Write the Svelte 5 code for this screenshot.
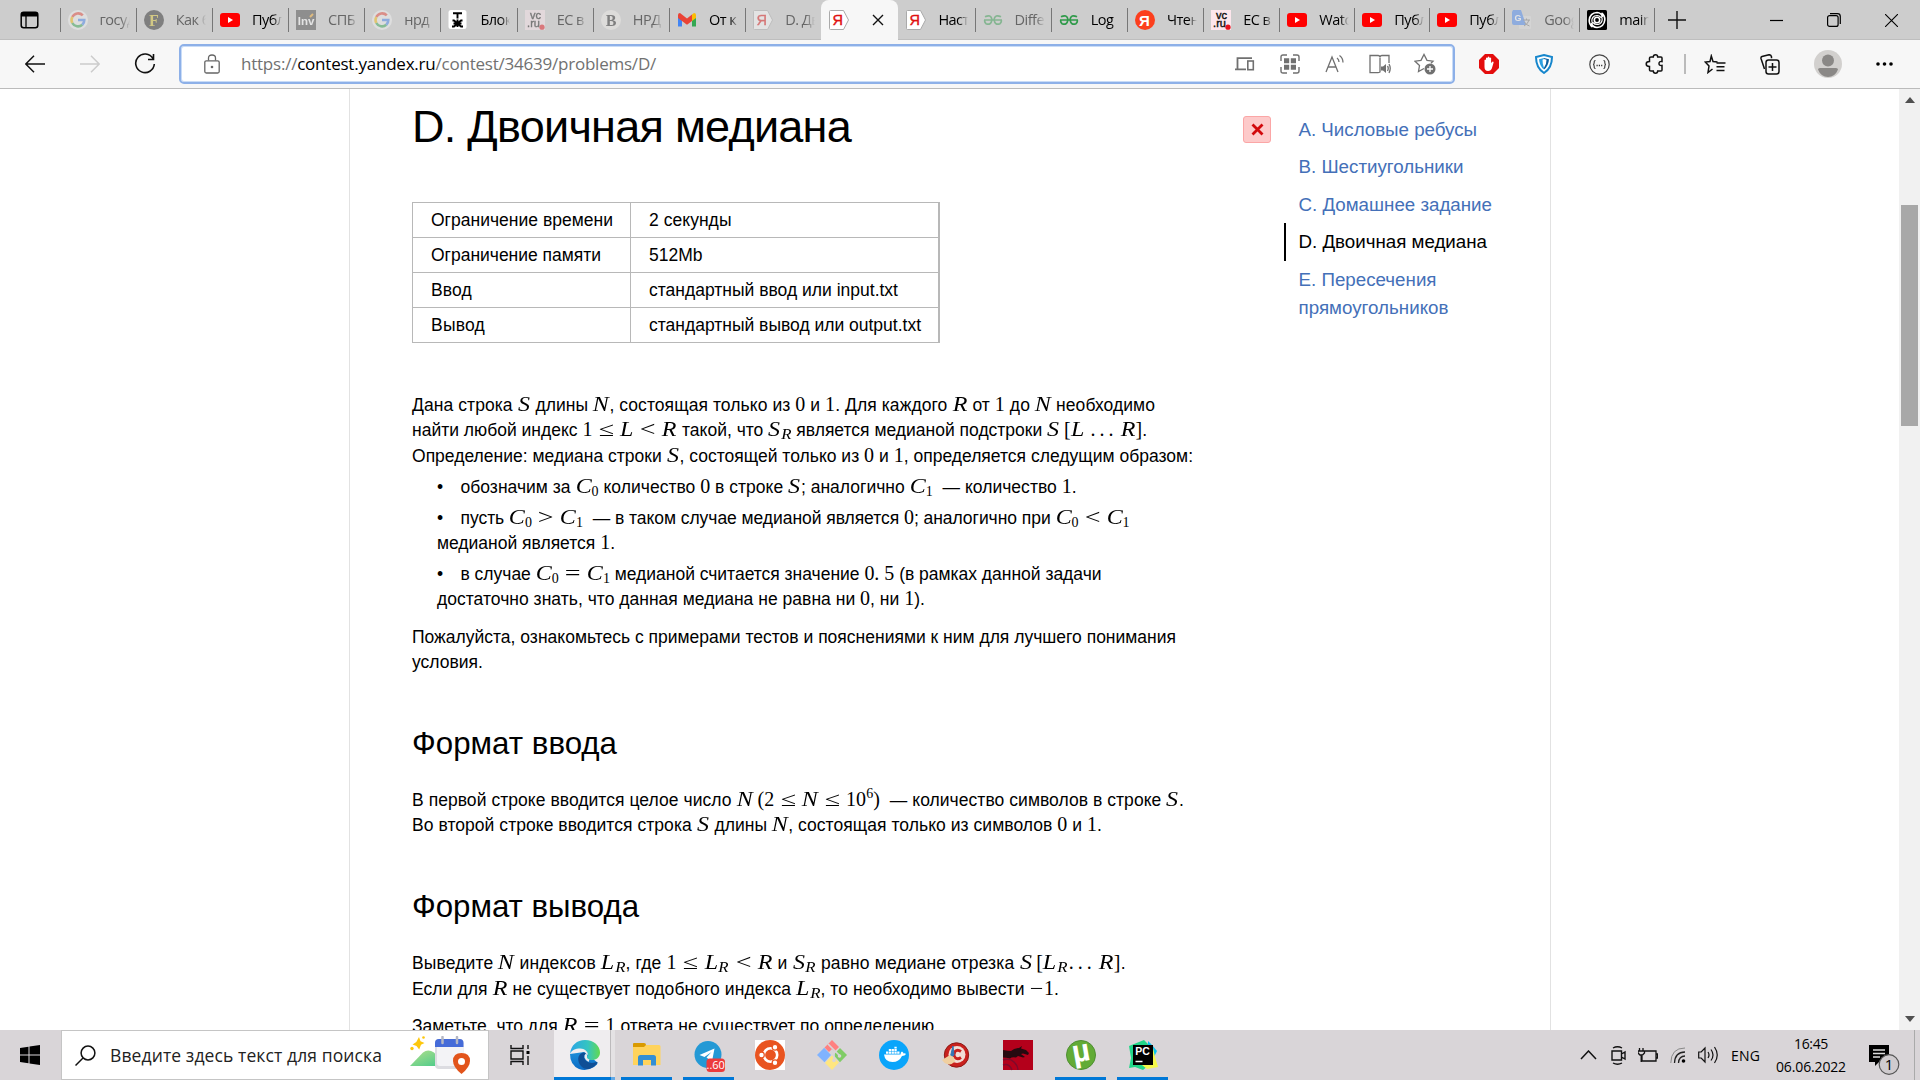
<script>
  const tabs = [
    { icon: 'google', label: 'госуд', dim: true },
    { icon: 'f', label: 'Как б', dim: true },
    { icon: 'yt', label: 'Публ' },
    { icon: 'inv', label: 'СПБ', dim: true },
    { icon: 'google', label: 'нрд', dim: true },
    { icon: 'tj', label: 'Блок' },
    { icon: 'vc', label: 'ЕС в', dim: true },
    { icon: 'b', label: 'НРД', dim: true },
    { icon: 'gmail', label: 'От к' },
    { icon: 'ya', label: 'D. Дв', dim: true },
    { icon: 'ya', active: true },
    { icon: 'ya', label: 'Наст' },
    { icon: 'gfg', label: 'Diffe', dim: true },
    { icon: 'gfg', label: 'Log' },
    { icon: 'yared', label: 'Чтен' },
    { icon: 'vc', label: 'ЕС в' },
    { icon: 'yt', label: 'Watc', late: true },
    { icon: 'yt', label: 'Публ', late: true },
    { icon: 'yt', label: 'Публ', late: true },
    { icon: 'translate', label: 'Goog', dim: true, late: true },
    { icon: 'spiral', label: 'main', late: true }
  ];

  const limits = [
    ['Ограничение времени', 182, '2 секунды', 82.5],
    ['Ограничение памяти', 170, '512Mb', 53.5],
    ['Ввод', 41, 'стандартный ввод или input.txt', 249],
    ['Вывод', 54, 'стандартный вывод или output.txt', 272]
  ];

  const apps = [
    { name: 'edge', open: true, current: true },
    { name: 'explorer', open: true },
    { name: 'telegram', open: true },
    { name: 'ubuntu' },
    { name: 'git' },
    { name: 'docker' },
    { name: 'ccleaner' },
    { name: 'dragon' },
    { name: 'utorrent', open: true },
    { name: 'pycharm', open: true }
  ];

  // Tracks the text so that the element takes the given width in pixels.
  function fit(node, width) {
    const now = node.getBoundingClientRect().width;
    const count = node.textContent.length;
    if (count) node.style.letterSpacing = `${(width - now) / count}px`;
  }
</script>

{#snippet tabIcon(name)}
  <svg class="fav" viewBox="0 0 20 20">
    {#if name === 'google'}
      <circle cx="10" cy="10" r="10" fill="#f4f4f4" />
      <g fill="none" stroke-width="2.6">
        <path d="M14.8 5.300A6.500 6.500 0 0 0 4.300 7" stroke="#ea4335" />
        <path d="M4.300 7a6.500 6.500 0 0 0 0 6" stroke="#fbbc05" />
        <path d="M4.300 13a6.500 6.500 0 0 0 10 1.800" stroke="#34a853" />
        <path d="M14.300 14.800A6.500 6.500 0 0 0 16.300 10h-6.300" stroke="#4285f4" />
      </g>
    {:else if name === 'f'}
      <circle cx="10" cy="10" r="10" fill="#222" />
      <text x="10" y="15.500" class="serif" font-size="16" fill="#d9c22e">F</text>
    {:else if name === 'yt'}
      <rect y="3" width="20" height="14" rx="3" fill="#f00" />
      <path d="M8 7v6l5-3z" fill="#fff" />
    {:else if name === 'inv'}
      <rect width="20" height="20" fill="#444" />
      <text x="10" y="15" class="sans" font-size="11.500" fill="#fff">Inv</text>
      <path d="M14 7l3-3" stroke="#f5a623" stroke-width="2" />
    {:else if name === 'tj'}
      <rect x=".5" width="18" height="19" rx="2.500" fill="#fff" />
      <path d="M5 3.200h9M9.500 3v5.500M9.500 9.500v7.500M4.500 10.500h1.500l7 6h2M14.500 10.500h-1.500l-7 6h-2M5.500 13.500h8" stroke="#000" stroke-width="1.900" fill="none" />
    {:else if name === 'vc'}
      <rect width="20" height="20" fill="#fde6ec" />
      <g class="thin" font-size="11" fill="#111" stroke="#111" stroke-width=".400">
        <text x="10.500" y="8.500">vc</text>
        <text x="8.500" y="17">.ru</text>
      </g>
      <circle cx="17" cy="17.200" r="2.600" fill="#e8121c" />
    {:else if name === 'b'}
      <circle cx="10" cy="10" r="10" fill="#f1efeb" />
      <text x="10" y="15.500" class="serif" font-size="16" fill="#222">B</text>
    {:else if name === 'gmail'}
      <path d="M1 5v11.500h4V8z" fill="#4285f4" />
      <path d="M19 5v11.500h-4V8z" fill="#34a853" />
      <path d="M15 4.500 17 3q2 0 2 2v3l-4 3z" fill="#fbbc04" />
      <path d="M1 8V5q0-2 2-2l7 5.500L15 4.500V11l-5 3.800L5 11z" fill="#ea4335" />
    {:else if name === 'ya'}
      <path d="M1.500.500h13l5 9.500-5 9.500h-13q-1 0-1-1v-17q0-1 1-1z" fill="#fff" stroke="#aaa" />
      <text x="8.800" y="15.300" class="thin" font-size="14.500" fill="#e01010" stroke="#e01010" stroke-width=".400">Я</text>
    {:else if name === 'gfg'}
      <path d="M1 10h18M2 6.800q6-3 7 2.900-1 6-6 4-2-2-1-4M18 6.800q-6-3-7 2.900 1 6 6 4 2-2 1-4" stroke="#2f9a4a" stroke-width="1.700" fill="none" />
    {:else if name === 'yared'}
      <circle cx="10" cy="10" r="10" fill="#fc3f1d" />
      <text x="9.500" y="15.500" class="sans" font-size="15" fill="#fff">Я</text>
    {:else if name === 'translate'}
      <rect x="7" y="6" width="12" height="13" rx="1" fill="#ddd" />
      <path d="M1 0h8l5 15H2q-2 0-2-2V2z" fill="#4285f4" />
      <text x="6" y="10.500" class="sans" font-size="9" fill="#fff">G</text>
      <path d="M11 10h7M14.500 8.500V10M12 16q4-2 5-6M12.500 12q1.500 3 5 4" fill="none" stroke="#777" />
    {:else if name === 'spiral'}
      <rect width="20" height="20" rx="1.500" fill="#000" />
      <g fill="none" stroke="#fff" stroke-width="1.600">
        <circle cx="10" cy="10" r="2.700" />
        <path d="M5.500 17q-3.500-2.500-3.300-7Q3 3 10 2.500q4.500.200 5.500 4.500M14.500 3q3.500 2.500 3.300 7-.8 7-7.800 7.500-4.500-.2-5.500-4.500" />
        <path d="M5.500 13.500q-2-5 2-7.500 4-1.500 6.500 1.500M14.500 6.500q2 5-2 7.500-4 1.500-6.500-1.500" stroke-width="1.200" />
      </g>
    {/if}
  </svg>
{/snippet}

{#snippet appIcon(name)}
  <svg class="app" viewBox="0 0 30 30">
    {#if name === 'edge'}
      <defs>
        <linearGradient id="edgeTop" x1="0" x2="1"><stop offset="0" stop-color="#2aa5e6" /><stop offset=".6" stop-color="#35c5c0" /><stop offset="1" stop-color="#62d94f" /></linearGradient>
        <linearGradient id="edgeSide" x1="0" y1="0" x2="0" y2="1"><stop offset="0" stop-color="#1b8fd9" /><stop offset="1" stop-color="#0a6ac4" /></linearGradient>
      </defs>
      <path d="M0 14Q0 25 9 29q8 2.500 15-2 4-3 3.500-4.500L14 12z" fill="url(#edgeSide)" />
      <path d="M0 14C1 5 7 0 15 0c9 0 15 6 15 12.500 0 5-4 7.500-8 7.500-4 0-5.500-1-5-3 3-4-2-9.500-8.500-8.500-5 .5-7.500 3-8.500 5.500z" fill="url(#edgeTop)" />
      <path d="M13 12.500c-6 2-6 9-2 13.500 2 2 4.500 3.500 7.500 3q6-1.500 9-6.500-.5-1-2-.2c-6 2-11-1.300-11.500-5.300q0-2.500 2-3.500-1-1.500-3-1z" fill="#0f4f96" />
      <path d="M16 13.500q-2 1.500-1.500 4 1 3 4 4.500l1-2.500q-3-1-2.500-2.800.8-2-1-3.200z" fill="#efedef" />
    {:else if name === 'explorer'}
      <path d="M1 4q0-1 1-1h10q2 0 2 2v3H1z" fill="#d99a00" />
      <path d="M1 7h11l2-2h13q1.500 0 1.500 1.500V25H1z" fill="#ffd35c" />
      <path d="M6 25.500v-8q0-2.500 2.500-2.500h13q2.500 0 2.500 2.500v8h-5V20h-8v5.500z" fill="#338fd4" />
    {:else if name === 'telegram'}
      <circle cx="14" cy="14.500" r="13.500" fill="#2499d5" />
      <path d="M5.500 15 20.500 8.500l-2.500 13-5.500-4 5-5.500-7 5z" fill="#fff" />
      <rect x="12.500" y="18.500" width="18.500" height="13.500" rx="3.500" fill="#ec3b3b" />
      <text x="21.700" y="29" class="count" font-size="11" fill="#fff">..60</text>
    {:else if name === 'ubuntu'}
      <rect width="30" height="30" fill="#fff" />
      <circle cx="15" cy="15" r="15" fill="#e95420" />
      <circle cx="15.500" cy="15" r="6.700" fill="none" stroke="#fff" stroke-width="2.600" />
      <g fill="#fff" stroke="#e95420" stroke-width="1.200"><circle cx="6.500" cy="15" r="2.800" /><circle cx="20" cy="7.300" r="2.800" /><circle cx="20" cy="22.700" r="2.800" /></g>
    {:else if name === 'git'}
      <path d="M15 0l7 7-4.500 4.500L15 9l-3 3L7.500 7.500z" fill="#ff8080" />
      <path d="M7.200 7.800 14 15l-6.500 7.200L0 15z" fill="#80b3ff" />
      <path d="M15 15.500l7 7-7 7.500-7-7z" fill="#ffe680" />
      <path d="M23 8l7 7-7 7.200L16.500 15z" fill="#80cc66" />
      <path d="M11 4l6 6v11M17 10l6 6" stroke="#d9d5d8" stroke-width="1.700" fill="none" /><circle cx="17" cy="20.500" r="1.800" fill="#d9d5d8" /><circle cx="22.500" cy="16" r="1.800" fill="#d9d5d8" />
    {:else if name === 'docker'}
      <circle cx="15" cy="15" r="15" fill="#0aa5fb" />
      <path d="M5 14.500h16.500q0-2.500 1.500-3 1.500 1 1.500 2 1.500-.500 2.500.500-1 2-4 2-3 6-9.500 6-7.500 0-8.500-7.500z" fill="#fff" />
      <path d="M7 11.500h2.300v2.300H7zM9.800 11.500h2.300v2.300H9.800zM12.600 11.500h2.300v2.300h-2.300zM15.400 11.500h2.300v2.300h-2.300zM18.200 11.500h2.300v2.300h-2.300zM9.800 9h2.300v2H9.800zM12.600 9h2.300v2h-2.300zM15.400 9h2.300v2h-2.300zM15.400 6.800h2.300v1.700h-2.300z" fill="#fff" />
    {:else if name === 'ccleaner'}
      <circle cx="15.500" cy="15" r="12.200" fill="#c9211e" stroke="#8d1a16" />
      <circle cx="16" cy="14.500" r="8.500" fill="#f1ddd6" />
      <path d="M20 11.500q-3.500-2.500-6 0-1.800 3 0 6 2.500 2.500 6 0" fill="none" stroke="#c9211e" stroke-width="2.800" />
      <path d="M12 6l-3 12 4-3z" fill="#3477b5" stroke="#3477b5" />
      <path d="M1 20l8-5 4 2.500 1 4q-4 4-8 2.500-3-1-5-4z" fill="#f0cfa0" />
    {:else if name === 'dragon'}
      <rect width="30" height="30" fill="#b4001b" />
      <path d="M0 10q5 1 8 1 3-3 8-3l3-2-1 2.500 5 1.500 3 3-1 2-5-1.500-2 .500 4 3-2 .500-5-1.500-2 1.500q-4-1-6 1-4-1-7-1z" fill="#260a10" />
      <path d="M0 20q7-2 11 2t4 8M0 25q6-2 9 5" fill="none" stroke="#7e0a2c" stroke-width="1.500" />
    {:else if name === 'utorrent'}
      <circle cx="15" cy="15" r="14.500" fill="#62ab36" stroke="#4f8f33" />
      <text x="15.500" y="21.500" class="sans" font-size="31" fill="#fff" transform="rotate(-10 15 15)">µ</text>
    {:else if name === 'pycharm'}
      <path d="M1 6 11 2l5-2 5 5v20l-6 5-8-3-6 1 2-10z" fill="#21d789" />
      <path d="M20 1l4 4 5 6-4 8-5-5z" fill="#07c3f2" />
      <path d="M25 8l2 9 3 10-11 2-5-4z" fill="#f5f84a" />
      <rect x="5" y="5" width="20" height="20" fill="#000" />
      <text x="14.500" y="14.700" class="sans" font-size="10.500" fill="#fff">PC</text>
      <path d="M7.500 21.500h7" stroke="#fff" stroke-width="1.500" />
    {/if}
  </svg>
{/snippet}

<div class="screen">
  <header class="tabbar">
    <div class="tabmenu">
      <svg width="20" height="20" viewBox="0 0 20 20"><rect x="1.200" y="2.200" width="16.600" height="15.600" rx="2.500" fill="none" stroke="#000" stroke-width="1.500" /><path d="M1 6.500V4.500Q1 2 3.500 2h12Q18 2 18 4.500v2z" /><path d="M6 6v12" stroke="#000" stroke-width="1.300" /></svg>
    </div>
    {#each tabs as tab, n}
      <div class="tab" class:late={tab.late} class:active={tab.active} class:dim={tab.dim} class:bare={n === 11}>
        {@render tabIcon(tab.icon)}
        {#if tab.active}
          <svg class="closetab" viewBox="0 0 12 12"><path d="M1 1l10 10M11 1 1 11" stroke="#111" stroke-width="1.400" /></svg>
        {:else}
          <span>{tab.label}</span>
        {/if}
      </div>
    {/each}
    <div class="newtab">
      <svg width="18" height="18" viewBox="0 0 18 18"><path d="M9 0v18M0 9h18" stroke="#111" stroke-width="1.400" /></svg>
    </div>
    <div class="winctl">
      <div><svg width="13" height="13" viewBox="0 0 13 13"><path d="M0 6.500h13" stroke="#000" stroke-width="1.200" /></svg></div>
      <div><svg width="14" height="14" viewBox="0 0 14 14"><rect x=".6" y="2.600" width="10.500" height="10.800" rx="2" fill="none" stroke="#000" stroke-width="1.200" /><path d="M3 .700h7.500q2.800 0 2.800 2.800v7.500" fill="none" stroke="#000" stroke-width="1.200" /></svg></div>
      <div><svg width="13" height="13" viewBox="0 0 13 13"><path d="M0 0l13 13M13 0 0 13" stroke="#000" stroke-width="1.100" /></svg></div>
    </div>
  </header>

  <div class="toolbar">
    <div class="nav">
      <div><svg width="20" height="18" viewBox="0 0 20 18"><path d="M20 9H1M9 .800.800 9 9 17.200" fill="none" stroke="#111" stroke-width="1.500" /></svg></div>
      <div><svg width="20" height="18" viewBox="0 0 20 18"><path d="M0 9h19M11 .800 19.200 9 11 17.200" fill="none" stroke="#ccc" stroke-width="1.500" /></svg></div>
      <div><svg width="22" height="22" viewBox="0 0 22 22"><path d="M19 5.500A9.300 9.300 0 1 0 20.300 11M19.500 1v5.500H14" fill="none" stroke="#111" stroke-width="1.600" /></svg></div>
    </div>
    <div class="address">
      <svg class="lock" width="16" height="20" viewBox="0 0 16 20"><rect x=".8" y="6.800" width="14.400" height="12.200" rx="1.500" fill="none" stroke="#666" stroke-width="1.300" /><path d="M4.500 6.500V4q0-3 3.500-3t3.500 3v2.500" fill="none" stroke="#666" stroke-width="1.300" /><circle cx="8" cy="13" r="1.300" fill="#666" /></svg>
      <span class="url" use:fit={415}>https://<em>contest.yandex.ru</em>/contest/34639/problems/D/</span>
      <div class="urltools">
        <div><svg width="20" height="14" viewBox="0 0 20 14"><path d="M2.500 12V1.200H17M0 12.300h11" stroke="#707070" stroke-width="1.800" fill="none" /><rect x="12.800" y="4" width="5.500" height="8.700" fill="none" stroke="#707070" stroke-width="1.600" /></svg></div>
        <div><svg width="20" height="20" viewBox="0 0 20 20"><path d="M1 7V3q0-2 2-2h4M13 1h4q2 0 2 2v4M19 13v4q0 2-2 2h-4M7 19H3q-2 0-2-2v-4" fill="none" stroke="#707070" stroke-width="1.400" /><path d="M4 4.200h5.200v5H4zM10.800 4.200H16v5h-5.200zM4 10.800h5.200v5H4zM10.800 10.800H16v5h-5.200z" fill="#707070" /></svg></div>
        <div><svg width="20" height="20" viewBox="0 0 20 20"><path d="M1 18 7 3l6 15M3 13h8M12 4q2 1.500 2 4M14.500 1.500q3.500 2.500 3.500 7" fill="none" stroke="#707070" stroke-width="1.300" /></svg></div>
        <div><svg width="22" height="20" viewBox="0 0 22 20"><path d="M11 4v14q-1 .700-2 .700H1V1.500h8q2 0 2 2 0-2 2-2h7V9" fill="none" stroke="#707070" stroke-width="1.300" /><path d="M12 12.500h2l3-2.500v9l-3-2.500h-2z" fill="#707070" /><path d="M18.500 12q1.500 2 0 5M20 10q2.500 4 0 9" fill="none" stroke="#707070" stroke-width="1.300" /></svg></div>
        <div><svg width="22" height="22" viewBox="0 0 22 22"><path d="M10 15.500l-5.500 3 1-6L1 8.200l6-.9L10 1.500l3 5.800 6 .9-2 2" fill="none" stroke="#707070" stroke-width="1.300" /><circle cx="16" cy="16" r="5.500" fill="#707070" /><path d="M16 13v6M13 16h6" stroke="#fff" stroke-width="1.300" /></svg></div>
      </div>
    </div>
    <div class="ext">
      <div><svg width="20" height="20" viewBox="0 0 20 20"><path d="M6 0h8l6 6v8l-6 6H6l-6-6V6z" fill="#e40d0d" /><path d="M5.500 10V6q.8-1 1.500 0V4q.8-1 1.700 0V3q.8-1 1.700 0v1q.8-1 1.700 0v5l1.500-1.500q1.200 0 1 1L13 14q-1 3-4 3-3.500 0-3.500-4z" fill="#fff" /></svg></div>
      <div><svg width="18" height="20" viewBox="0 0 18 20"><path d="M9 1l8 2q0 11-8 16Q1 14 1 3z" fill="#fff" stroke="#1686cc" stroke-width="2" /><path d="M9 4l5 1.200Q13.500 12 9 15.500z" fill="#0c5f9f" /><path d="M9 4 4 5.200Q4.500 12 9 15.500z" fill="#2d9fe0" /><path d="M9 5l2.500.800q0 5-2.500 8-1.500-3-1.500-8z" fill="#fff" /></svg></div>
      <div><svg width="21" height="21" viewBox="0 0 21 21"><circle cx="10.500" cy="10.500" r="9.700" fill="none" stroke="#444" stroke-width="1.200" /><path d="M6.500 6.500q-1.500 0-1.300 2 0 1.800-1 2 1 .2 1 2-.2 2 1.300 2M14.500 6.500q1.500 0 1.300 2 0 1.800 1 2-1 .2-1 2 .2 2-1.300 2" fill="none" stroke="#333" stroke-width="1.100" /><path d="M7.500 11.500h6" stroke="#333" stroke-width="1.300" stroke-dasharray="1.200 1.100" /></svg></div>
      <div><svg width="20" height="20" viewBox="0 0 20 20"><path d="M6 3h2.300q0-2.200 2.200-2.200T12.700 3H16q1 0 1 1v3.500q-3-.500-3 2t3 2V16q0 1-1 1h-3.300q0 2.200-2.200 2.200T8.300 17H6q-1.500 0-1.500-1v-3.500Q1.200 12.500 1.200 10t3.300-2.500V4Q4.500 3 6 3z" fill="none" stroke="#111" stroke-width="1.500" /></svg></div>
    </div>
    <div class="divider"></div>
    <div class="side">
      <div><svg width="22" height="20" viewBox="0 0 22 20"><path d="M13 7.500 8.500 7 6.800 1.500 5.500 7 .8 7.500l3.700 4L3.500 18 8 14.500M12 8.500h9M12 12.300h8M12 16h8" transform="translate(.5 .5)" fill="none" stroke="#111" stroke-width="1.500" /></svg></div>
      <div class="collections"><svg width="20" height="21" viewBox="0 0 20 21"><path d="M4.500 15 1 4.500Q.700 3 2 2.500L9 .700q2 0 2.500 2v1.500" fill="none" stroke="#111" stroke-width="1.500" /><rect x="6" y="6" width="13" height="14" rx="2.500" fill="none" stroke="#111" stroke-width="1.500" /><path d="M12.500 9v8M8.500 13h8" stroke="#111" stroke-width="1.500" /></svg></div>
      <div><svg width="28" height="28" viewBox="0 0 28 28"><circle cx="14" cy="14" r="14" fill="#d2d0ce" /><circle cx="14" cy="10.500" r="6" fill="#8a8886" /><path d="M4 19.500q0-1.500 2-1.500h16q2 0 2 1.500-3 7.500-10 7.500T4 19.500z" fill="#8a8886" /></svg></div>
      <div><svg width="17" height="4" viewBox="0 0 17 4"><circle cx="2" cy="2" r="1.800" /><circle cx="8.500" cy="2" r="1.800" /><circle cx="15" cy="2" r="1.800" /></svg></div>
    </div>
  </div>

  <main>
    <div class="sheet">
      <article>
        <h1><span use:fit={439}>D. Двоичная медиана</span></h1>
        <table>
          <tbody>
            {#each limits as [name, nameWidth, value, valueWidth]}
              <tr><td><span use:fit={nameWidth}>{name}</span></td><td><span use:fit={valueWidth}>{value}</span></td></tr>
            {/each}
          </tbody>
        </table>
        <section class="text">
          <p>
            <span use:fit={743}>Дана строка <i>S</i> длины <i>N</i>, состоящая только из <b>0</b> и <b>1</b>. Для каждого <i>R</i> от <b>1</b> до <i>N</i> необходимо</span>
            <span use:fit={735}>найти любой индекс <b>1</b><u>≤</u><i>L</i><u>&lt;</u><i>R</i> такой, что <i>S</i><sub><i>R</i></sub> является медианой подстроки <i>S</i><b class="open">[</b><i>L</i><b class="dots">...</b><i>R</i><b>]</b>.</span>
            <span use:fit={781}>Определение: медиана строки <i>S</i>, состоящей только из <b>0</b> и <b>1</b>, определяется следущим образом:</span>
          </p>
          <ul>
            <li><span class="mark">•</span><span use:fit={616}>обозначим за <i>C</i><sub><b>0</b></sub> количество <b>0</b> в строке <i>S</i>; аналогично <i>C</i><sub><b>1</b></sub> &nbsp;— количество <b>1</b>.</span></li>
            <li><span class="mark">•</span><span use:fit={669}>пусть <i>C</i><sub><b>0</b></sub><u>&gt;</u><i>C</i><sub><b>1</b></sub> &nbsp;— в таком случае медианой является <b>0</b>; аналогично при <i>C</i><sub><b>0</b></sub><u>&lt;</u><i>C</i><sub><b>1</b></sub></span><br /><span use:fit={178}>медианой является <b>1</b>.</span></li>
            <li><span class="mark">•</span><span use:fit={641}>в случае <i>C</i><sub><b>0</b></sub><u>=</u><i>C</i><sub><b>1</b></sub> медианой считается значение <b>0. 5</b> (в рамках данной задачи</span><br /><span use:fit={488}>достаточно знать, что данная медиана не равна ни <b>0</b>, ни <b>1</b>).</span></li>
          </ul>
          <p class="after">
            <span use:fit={764}>Пожалуйста, ознакомьтесь с примерами тестов и пояснениями к ним для лучшего понимания</span>
            <span use:fit={71}>условия.</span>
          </p>
        </section>
        <h2><span use:fit={205}>Формат ввода</span></h2>
        <section class="text">
          <p>
            <span use:fit={772}>В первой строке вводится целое число <i>N</i> <b>(2</b><u>≤</u><i>N</i><u>≤</u><b>10<sup>6</sup>)</b> &nbsp;— количество символов в строке <i>S</i>.</span>
            <span use:fit={690}>Во второй строке вводится строка <i>S</i> длины <i>N</i>, состоящая только из символов <b>0</b> и <b>1</b>.</span>
          </p>
        </section>
        <h2><span use:fit={227}>Формат вывода</span></h2>
        <section class="text last">
          <p>
            <span use:fit={714}>Выведите <i>N</i> индексов <i>L</i><sub><i>R</i></sub>, где <b>1</b><u>≤</u><i>L</i><sub><i>R</i></sub><u>&lt;</u><i>R</i> и <i>S</i><sub><i>R</i></sub> равно медиане отрезка <i>S</i><b class="open">[</b><i>L</i><sub><i>R</i></sub><b class="dots tight">...</b><i>R</i><b>]</b>.</span>
            <span use:fit={647}>Если для <i>R</i> не существует подобного индекса <i>L</i><sub><i>R</i></sub>, то необходимо вывести <b><s>−</s>1</b>.</span>
          </p>
          <p class="after">
            <span use:fit={527}>Заметьте, что для <i>R</i><u>=</u><b>1</b> ответа не существует по определению.</span>
          </p>
        </section>
      </article>
      <aside>
        <div class="problem"><span class="badge"><svg width="13" height="13" viewBox="0 0 13 13"><path d="M1.500 1.500l10 10M11.500 1.500l-10 10" stroke="#d2090c" stroke-width="2.800" /></svg></span><div class="name"><span use:fit={178.5}>A. Числовые ребусы</span></div></div>
        <div class="problem"><div class="name"><span use:fit={165}>B. Шестиугольники</span></div></div>
        <div class="problem"><div class="name"><span use:fit={193.5}>C. Домашнее задание</span></div></div>
        <div class="problem chosen"><div class="name"><span use:fit={188.5}>D. Двоичная медиана</span></div></div>
        <div class="problem"><div class="name"><span use:fit={138}>E. Пересечения</span><span use:fit={150}>прямоугольников</span></div></div>
      </aside>
    </div>
    <div class="scrollbar">
      <svg width="10" height="6" viewBox="0 0 10 6"><path d="M0 6l5-6 5 6z" fill="#505050" /></svg>
      <div class="thumb"></div>
      <svg width="10" height="6" viewBox="0 0 10 6"><path d="M0 0l5 6 5-6z" fill="#505050" /></svg>
    </div>
  </main>

  <footer>
    <div class="start"><svg width="20" height="20" viewBox="0 0 20 20"><path d="M0 3l8.500-1.200v7.700H0zM9.500 1.600 20 0v9.500H9.500zM0 10.500h8.500v7.700L0 17zM9.500 10.500H20V20L9.500 18.400z" /></svg></div>
    <div class="search">
      <svg class="lens" width="21" height="21" viewBox="0 0 21 21"><circle cx="13" cy="8" r="6.900" fill="none" stroke="#111" stroke-width="1.500" /><path d="M8 13l-7.500 7.500" stroke="#111" stroke-width="1.500" /></svg>
      <span use:fit={272}>Введите здесь текст для поиска</span>
      <svg class="scene" width="60" height="38" viewBox="0 0 60 38">
        <defs><linearGradient id="hill" x1="0" y1="0" x2="1" y2="1"><stop offset="0" stop-color="#b4e08b" /><stop offset="1" stop-color="#40c88a" /></linearGradient></defs>
        <path d="M0 30 13 16.500q5-4 11 0L36 30z" fill="url(#hill)" />
        <path d="M9 1l1.500 4.200L14.500 7 11 8.800l-1.800 4.700L6.500 10 2.500 8.500 6.300 6z" fill="#fdc70c" /><circle cx="13.500" cy="1.500" r="1.300" fill="#fdc70c" /><circle cx="2" cy="12.500" r="1.700" fill="#fdc70c" />
        <rect x="25" y="3" width="28.500" height="30" rx="4" fill="#dcdce1" /><rect x="27" y="6" width="26.500" height="24" rx="3" fill="#f3f3f6" /><path d="M25 11V7q0-4 4-4h20.500q4 0 4 4v4z" fill="#456bd8" />
        <path d="M32.500 1v6M47 1v6" stroke="#b4b7c4" stroke-width="2.500" stroke-linecap="round" />
        <path d="M51.500 38q-8.500-7-8.500-13 0-8 8.500-8t8.500 8q0 6-8.500 13z" fill="#e2541b" /><circle cx="51.500" cy="25.500" r="3.500" fill="#fff" />
      </svg>
    </div>
    <div class="view"><svg width="20" height="20" viewBox="0 0 20 20"><path d="M1 0v3.500h12V0M1 20v-3.500h12V20M1 6h12v8H1zM18 0v4M18 11v9" fill="none" stroke="#111" stroke-width="1.400" /><path d="M16.500 6h3v3h-3z" /></svg></div>
    <div class="apps">
      {#each apps as app}
        <div class="slot" class:open={app.open} class:current={app.current}>{@render appIcon(app.name)}</div>
      {/each}
    </div>
    <div class="tray">
      <div><svg width="17" height="10" viewBox="0 0 17 10"><path d="M1 9l7.500-8L16 9" fill="none" stroke="#111" stroke-width="1.500" /></svg></div>
      <div><svg width="15" height="19" viewBox="0 0 15 19"><path d="M2 2q4.500-2.500 9 0M2 17q4.500 2.500 9 0M1 5h9.500v9H1zM10.500 8 14 6v7l-3.500-2" fill="none" stroke="#111" stroke-width="1.400" /></svg></div>
      <div><svg width="20" height="15" viewBox="0 0 20 15"><path d="M6 3h12v10H4V8M18 6h1.500v4H18M1.500 0v3M5 0v3M0 3h6.500v2L4.500 7H2L0 5zM3.200 7v7" fill="none" stroke="#111" stroke-width="1.300" /></svg></div>
      <div><svg width="16" height="16" viewBox="0 0 16 16"><path d="M.800 16Q1 1 15 1" fill="none" stroke="#888" /><path d="M4.500 16Q5 5 15 5M8.500 16Q9 9 15 9" fill="none" stroke="#222" stroke-width="1.300" /><circle cx="13.500" cy="14" r="1.800" /></svg></div>
      <div><svg width="21" height="18" viewBox="0 0 21 18"><path d="M.700 6v6h2.500L7 16V2L3.200 6zM10 6q2 3 0 6M13 3.500q4 5.500 0 11M16.500 1q5.500 8 0 16" fill="none" stroke="#111" stroke-width="1.200" /></svg></div>
    </div>
    <div class="lang"><span use:fit={29}>ENG</span></div>
    <div class="clock"><span use:fit={34}>16:45</span><span use:fit={70}>06.06.2022</span></div>
    <div class="notes"><svg width="31" height="31" viewBox="0 0 31 31"><path d="M0 0h20v17H10l-4 4v-4H0z" /><path d="M4 5h12M4 8.500h12M4 12h7" stroke="#ddd" stroke-width="1.300" /><circle cx="20" cy="19.500" r="9.800" fill="#cfcbce" stroke="#555" stroke-width="1.200" /><text x="20" y="25" class="count" font-size="15" fill="#000">1</text></svg></div>
  </footer>
</div>

<style>
  :global(body) { overflow: hidden; background: #fff; }
  .screen { width: 1920px; height: 1080px; display: flex; flex-direction: column; overflow: hidden; font-family: 'Liberation Sans', sans-serif; color: #000; }
  svg { display: block; flex: none; }
  svg text { text-anchor: middle; }
  .serif { font-family: 'Liberation Serif', serif; font-weight: 700; }
  .sans { font-family: 'Liberation Sans', sans-serif; font-weight: 700; }
  .thin { font-family: 'Liberation Sans', sans-serif; }
  .count { font-family: 'Open Sans', sans-serif; }

  .tabbar { flex: none; height: 40px; display: flex; align-items: stretch; background: #cdcdcd; box-shadow: inset 0 -1px #bebebe; font: 14.5px/40px 'Open Sans', sans-serif; }
  .tabmenu { width: 59.500px; display: flex; align-items: center; justify-content: center; }
  .tab { flex: none; box-sizing: border-box; width: 76.200px; display: flex; align-items: center; padding-left: 8px; background: linear-gradient(#777, #777) 0 8px / 1px 24px no-repeat; }
  .tab.late { width: 75px; }
  .tab.bare { background: none; }
  .tab.active { width: 77px; background: #f7f7f7; border-radius: 8px 8px 0 0; }
  .fav { width: 20px; height: 20px; }
  .dim .fav { opacity: .45; }
  .dim span { color: #666; }
  .tab span { width: 30px; margin-left: 12px; overflow: hidden; white-space: nowrap; letter-spacing: -.5px; mask-image: linear-gradient(90deg, #000 70%, transparent); }
  .closetab { width: 12px; height: 12px; margin-left: 22.500px; }
  .newtab { width: 46px; display: flex; align-items: center; justify-content: center; background: linear-gradient(#777, #777) 0 8px / 1px 24px no-repeat; }
  .winctl { margin-left: auto; display: flex; }
  .winctl div { width: 57.5px; display: flex; align-items: center; justify-content: center; }

  .toolbar { flex: none; box-sizing: border-box; height: 49px; display: flex; align-items: center; background: #f7f7f7; border-bottom: 1px solid #bbb; }
  .nav { display: flex; width: 172px; padding-left: 7px; }
  .nav div { flex: none; width: 55.3px; height: 40px; display: flex; align-items: center; justify-content: center; }
  .address { box-sizing: border-box; width: 1276px; height: 40px; display: flex; align-items: center; background: #fff; border: 2px solid #8db0e8; box-shadow: inset 0 0 0 1px #c9dcf7; border-radius: 5px; }
  .lock { margin: 0 21px 0 23px; }
  .url { font: 17px 'Open Sans', sans-serif; color: #717171; white-space: nowrap; padding-bottom: 2px; }
  .url em { font-style: normal; color: #000; }
  .urltools { display: flex; margin-left: auto; padding-right: 5px; }
  .urltools div { width: 45.2px; display: flex; align-items: center; justify-content: center; }
  .ext { display: flex; padding-left: 6.500px; }
  .ext div { width: 55.200px; display: flex; align-items: center; justify-content: center; }
  .divider { width: 2px; height: 20px; margin-left: 2px; background: #bbb; }
  .side { display: flex; }
  .side div { width: 56.500px; display: flex; align-items: center; justify-content: center; }
  .side .collections { box-sizing: border-box; padding-right: 2px; }

  main { flex: none; height: 941px; display: flex; overflow: hidden; background: #fff; }
  .sheet { box-sizing: border-box; width: 1202px; height: 941px; margin-left: 349px; display: flex; border: solid #e2e2e2; border-width: 0 1px; padding: 10px 0 0 62px; overflow: hidden; }
  article { width: 831px; flex: none; }
  article span, aside span { display: inline-block; white-space: nowrap; }
  h1, h2, p, ul { margin: 0; padding: 0; font-weight: 400; }
  h1 { font-size: 45px; line-height: 56px; height: 56px; margin-bottom: 47px; }
  h2 { font-size: 31.250px; line-height: 40px; height: 40px; margin: 48.500px 0 23.500px; }
  table { width: 528px; margin-bottom: 50px; border-collapse: separate; border-spacing: 0; border: 1px solid #b8b8b8; border-width: 1px 1px 0 1px; font-size: 17.500px; }
  td { box-sizing: border-box; height: 35px; padding: 0 16px 0 18px; line-height: 20px; border: solid #b8b8b8; border-width: 0 1px 1px 0; }
  td:first-child { width: 218px; }
  .text { font-size: 17.500px; line-height: 25.330px; }
  .last { padding-top: 1px; }
  p > span { display: block; width: fit-content; height: 25.330px; }
  .after { margin-top: 12.500px; }
  ul { list-style: none; }
  li { padding-left: 25px; margin-top: 5.600px; white-space: nowrap; }
  li span { height: 25.330px; vertical-align: top; }
  .mark { width: 23.500px; }
  i, b, u, sup { font-family: 'Liberation Serif', serif; font-size: 20px; font-weight: 400; line-height: 0; text-decoration: none; }
  i { display: inline-block; transform: scaleX(1.200); margin: 0 .08em 0 .06em; }
  u { display: inline-block; transform: scaleX(1.400); margin: 0 .42em; }
  s { display: inline-block; text-decoration: none; transform: scaleX(1.200); margin: 0 .08em; }
  .open { padding-left: .2em; }
  .dots { padding: 0 .15em 0 .3em; letter-spacing: 4px; }
  .tight { padding-left: .05em; }
  sub { font-size: 14px; line-height: 0; vertical-align: -3px; }
  sub i, sub b, sup { font-size: 14px; }
  sup { vertical-align: 8px; }

  aside { padding-top: 16.500px; width: 290px; font-size: 18.750px; line-height: 28px; }
  .problem { position: relative; margin-bottom: 9.500px; padding-left: 55.500px; color: #4470b8; }
  .name span { display: block; width: fit-content; }
  .problem.chosen { color: #000; }
  .problem.chosen::before { content: ''; position: absolute; left: 41px; top: -5px; width: 2px; height: 38px; background: #000; }
  .badge { position: absolute; left: 0; top: .5px; box-sizing: border-box; width: 28px; height: 27px; border: 1px solid #fba6a6; border-radius: 3px; background: #fdcaca; }
  .badge svg { margin: 6px auto; }

  .scrollbar { box-sizing: border-box; width: 21px; margin-left: auto; padding: 8px 0; display: flex; flex-direction: column; align-items: center; background: #f1f1f1; }
  .thumb { width: 17px; height: 221px; margin: 102px 0 auto; background: #a8a8a8; }

  footer { flex: none; height: 50px; display: flex; background: #d9d5d8; font-family: 'Open Sans', sans-serif; }
  .start { width: 60px; padding-right: 1px; display: flex; align-items: center; justify-content: center; }
  .search { box-sizing: border-box; width: 428px; display: flex; align-items: center; background: #fff; border: 1px solid #c5c5c5; padding-left: 13px; font-size: 17.500px; color: #222; }
  .search span { margin-left: 14px; white-space: nowrap; }
  .scene { margin-left: auto; margin-right: 18px; }
  .view { box-sizing: border-box; width: 65px; padding-right: 3px; display: flex; align-items: center; justify-content: center; }
  .apps { display: flex; gap: 11px; }
  .slot { box-sizing: border-box; width: 51px; padding-right: 2px; display: flex; align-items: center; justify-content: center; }
  .slot.open { box-shadow: inset 0 -3px #0078d7; }
  .slot.current { width: 61px; margin-right: -5px; box-shadow: none; background: linear-gradient(90deg, #0078d7 57px, #62a9e6 57px) 0 100% / 100% 3px no-repeat, linear-gradient(90deg, #efedef 56px, #bcbabc 56px 57px, #e4e2e4 57px); }
  .app { width: 30px; height: 30px; overflow: visible; }
  .tray { margin-left: auto; display: flex; }
  .tray div { width: 30px; display: flex; align-items: center; justify-content: center; }
  .lang { width: 45px; display: flex; align-items: center; padding-left: 8px; font-size: 14px; }
  .clock { width: 70px; display: flex; flex-direction: column; align-items: center; font-size: 14px; line-height: 23px; padding-top: 2px; white-space: nowrap; }
  .notes { width: 45px; padding: 15px 0 0 23px; border-right: 1px solid #aaa; margin-right: 5px; }
</style>
